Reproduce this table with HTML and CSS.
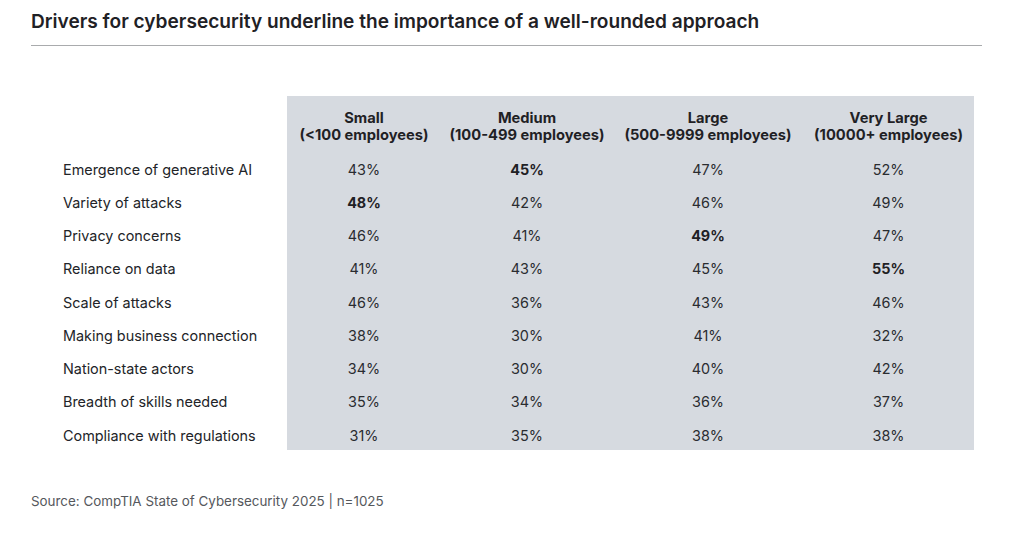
FILE: index.html
```html
<!DOCTYPE html>
<html>
<head>
<meta charset="utf-8">
<link rel="stylesheet" href="styles.css">
</head>
<body>
<div class="page">
  <h1 class="title">Drivers for cybersecurity underline the importance of a well-rounded approach</h1>
  <table class="data">
    <colgroup>
      <col class="c-label"><col class="c1"><col class="c2"><col class="c3"><col class="c4">
    </colgroup>
    <thead>
      <tr>
        <th class="label"></th>
        <th>Small<br>(&lt;100 employees)</th>
        <th>Medium<br>(100-499 employees)</th>
        <th>Large<br>(500-9999 employees)</th>
        <th>Very Large<br>(10000+ employees)</th>
      </tr>
    </thead>
    <tbody>
      <tr><td class="label">Emergence of generative AI</td><td>43%</td><td class="b">45%</td><td>47%</td><td>52%</td></tr>
      <tr><td class="label">Variety of attacks</td><td class="b">48%</td><td>42%</td><td>46%</td><td>49%</td></tr>
      <tr><td class="label">Privacy concerns</td><td>46%</td><td>41%</td><td class="b">49%</td><td>47%</td></tr>
      <tr><td class="label">Reliance on data</td><td>41%</td><td>43%</td><td>45%</td><td class="b">55%</td></tr>
      <tr><td class="label">Scale of attacks</td><td>46%</td><td>36%</td><td>43%</td><td>46%</td></tr>
      <tr><td class="label">Making business connection</td><td>38%</td><td>30%</td><td>41%</td><td>32%</td></tr>
      <tr><td class="label">Nation-state actors</td><td>34%</td><td>30%</td><td>40%</td><td>42%</td></tr>
      <tr><td class="label">Breadth of skills needed</td><td>35%</td><td>34%</td><td>36%</td><td>37%</td></tr>
      <tr><td class="label">Compliance with regulations</td><td>31%</td><td>35%</td><td>38%</td><td>38%</td></tr>
    </tbody>
  </table>
  <p class="source">Source: CompTIA State of Cybersecurity 2025 | n=1025</p>
</div>
</body>
</html>
```

FILE: styles.css
```css
html, body {
  margin: 0;
  padding: 0;
  background: #ffffff;
}
body {
  font-family: Inter, "Noto Sans", "Liberation Sans", sans-serif;
  color: #222428;
}
.page {
  width: 951px;
  padding: 9px 0 0 31px;
}
.title {
  margin: 0;
  font-size: 19.1px;
  font-weight: 600;
  line-height: 25px;
  color: #1f2125;
  padding-bottom: 11px;
  border-bottom: 1px solid #a9abad;
}
.data {
  margin-top: 50px;
  border-collapse: collapse;
  table-layout: fixed;
  width: 943px;
  font-size: 14.4px;
}
.c-label { width: 256px; }
.c1 { width: 154px; }
.c2 { width: 172px; }
.c3 { width: 190px; }
.c4 { width: 171px; }
.data th {
  background: #d6dae0;
  font-size: 14.7px;
  font-weight: 700;
  line-height: 17px;
  height: 55px;
  padding: 14px 0 0;
  vertical-align: top;
  text-align: center;
  color: #1f2125;
  box-sizing: border-box;
}
.data th.label,
.data td.label {
  background: transparent;
}
.data td {
  background: #d6dae0;
  text-align: center;
  height: 33.25px;
  padding: 3px 0 0;
  box-sizing: border-box;
  line-height: 17px;
  color: #2a2c30;
}
.data td.label {
  text-align: left;
  padding-left: 32px;
  color: #222428;
}
.data td.b {
  font-weight: 700;
  color: #1f2125;
}
.source {
  margin: 43px 0 0;
  font-size: 13.4px;
  line-height: 16px;
  color: #55585c;
}
```
